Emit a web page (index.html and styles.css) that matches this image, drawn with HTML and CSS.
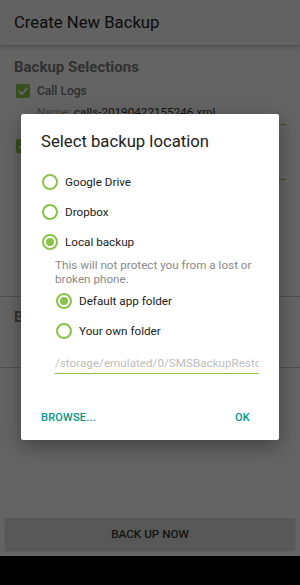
FILE: index.html
```html
<!DOCTYPE html>
<html>
<head>
<meta charset="utf-8">
<link rel="stylesheet" href="styles.css">
</head>
<body>
<div class="screen">
  <div class="app">
    <header class="toolbar">Create New Backup</header>
    <div class="content">
      <section class="selections">
        <h2 class="section-title">Backup Selections</h2>
        <div class="check-row">
          <span class="checkbox"><svg viewBox="0 0 14 14" width="14" height="14"><path d="M3 7.2 L5.8 10 L11.2 4.2" fill="none" stroke="#fff" stroke-width="1.8"/></svg></span>
          <span class="check-label">Call Logs</span>
        </div>
        <div class="name-row">
          <span class="name-key">Name:</span>
          <span class="name-field">calls-20190422155246.xml</span>
        </div>
        <div class="check-row second">
          <span class="checkbox"><svg viewBox="0 0 14 14" width="14" height="14"><path d="M3 7.2 L5.8 10 L11.2 4.2" fill="none" stroke="#fff" stroke-width="1.8"/></svg></span>
        </div>
        <div class="name-row blank">
          <span class="name-field"></span>
        </div>
      </section>
      <section class="location">
        <h2 class="section-title">B</h2>
      </section>
      <div class="spacer"></div>
      <button class="backup-btn">BACK UP NOW</button>
    </div>
  </div>
  <div class="navbar"></div>

  <div class="scrim"></div>

  <div class="dialog">
    <h1 class="dialog-title">Select backup location</h1>
    <div class="options">
      <div class="radio-row"><span class="radio"></span><span class="radio-label">Google Drive</span></div>
      <div class="radio-row"><span class="radio"></span><span class="radio-label">Dropbox</span></div>
      <div class="radio-row"><span class="radio on"></span><span class="radio-label">Local backup</span></div>
    </div>
    <div class="local">
      <p class="hint">This will not protect you from a lost or broken phone.</p>
      <div class="sub-options">
        <div class="radio-row"><span class="radio on"></span><span class="radio-label">Default app folder</span></div>
        <div class="radio-row"><span class="radio"></span><span class="radio-label">Your own folder</span></div>
      </div>
      <div class="path-input">/storage/emulated/0/SMSBackupRestc</div>
    </div>
    <div class="actions">
      <span class="action">BROWSE...</span>
      <span class="action">OK</span>
    </div>
  </div>
</div>
</body>
</html>
```

FILE: styles.css
```css
* { box-sizing: border-box; }
html, body { margin: 0; padding: 0; }
body {
  width: 300px;
  height: 585px;
  overflow: hidden;
  font-family: Roboto, "Noto Sans", sans-serif;
  background: #000;
}
.screen {
  position: relative;
  width: 300px;
  height: 585px;
  display: flex;
  flex-direction: column;
}
.app {
  height: 556px;
  background: #fafafa;
  display: flex;
  flex-direction: column;
}
.toolbar {
  height: 45px;
  padding-left: 14px;
  display: flex;
  align-items: center;
  font-size: 16.7px;
  color: #212121;
  background: #f5f5f5;
  box-shadow: 0 2px 4px rgba(0,0,0,0.25);
  position: relative;
  z-index: 1;
}
.content {
  flex: 1;
  display: flex;
  flex-direction: column;
}
.selections {
  padding: 12px 14px 0 14px;
  height: 252px;
  border-bottom: 1px solid #c8c8c8;
}
.section-title {
  margin: 0;
  font-size: 15px;
  font-weight: bold;
  color: #7a7a7a;
  line-height: 20px;
}
.check-row {
  display: flex;
  align-items: center;
  margin-top: 6px;
  height: 16px;
  padding-left: 2px;
}
.check-row.second { margin-top: 13px; }
.checkbox {
  width: 14px;
  height: 14px;
  background: #8bc34a;
  border-radius: 2px;
  display: block;
}
.checkbox svg { display: block; }
.check-label {
  margin-left: 7px;
  font-size: 12px;
  font-weight: 500;
  color: #757575;
}
.name-row {
  display: flex;
  padding-left: 23px;
  margin-top: 5px;
  font-size: 11.7px;
  line-height: 16px;
}
.name-row.blank { height: 21px; }
.name-key { color: #9e9e9e; }
.name-field {
  margin-left: 3px;
  flex: 1;
  color: #333;
  border-bottom: 1px solid #8bc34a;
  padding-bottom: 4px;
}
.location {
  height: 71px;
  padding: 10px 14px 0;
  border-bottom: 1px solid #c8c8c8;
}
.spacer { flex: 1; }
.backup-btn {
  margin: 0 5px 6px;
  height: 32px;
  border: none;
  border-radius: 2px;
  background: #dcdcdc;
  font-family: Roboto, sans-serif;
  font-size: 11.7px;
  font-weight: 500;
  color: #333;
  box-shadow: 0 1px 2px rgba(0,0,0,0.2);
}
.navbar {
  height: 29px;
  background: #000;
}
.scrim {
  position: absolute;
  left: 0;
  top: 0;
  width: 300px;
  height: 556px;
  background: rgba(0,0,0,0.6);
  z-index: 2;
}
.dialog {
  position: absolute;
  left: 21px;
  top: 114px;
  width: 258px;
  height: 326px;
  background: #fff;
  border-radius: 2px;
  box-shadow: 0 6px 20px rgba(0,0,0,0.35);
  padding: 17px 20px 0 20px;
  display: flex;
  flex-direction: column;
  z-index: 3;
}
.dialog-title {
  margin: 0;
  font-size: 16.7px;
  font-weight: normal;
  color: #212121;
  line-height: 22px;
}
.options {
  margin-top: 21px;
  display: flex;
  flex-direction: column;
  gap: 14px;
}
.radio-row {
  display: flex;
  align-items: center;
  height: 16px;
}
.radio {
  width: 16px;
  height: 16px;
  border: 2px solid #8bc34a;
  border-radius: 50%;
  margin-left: 1px;
  display: flex;
  align-items: center;
  justify-content: center;
  flex: none;
}
.radio.on::after {
  content: "";
  width: 8px;
  height: 8px;
  border-radius: 50%;
  background: #8bc34a;
}
.radio-label {
  margin-left: 7px;
  font-size: 11.7px;
  color: #212121;
}
.local {
  padding-left: 14px;
}
.hint {
  margin: 8px 0 0;
  font-size: 11.7px;
  line-height: 14px;
  color: #8a8a8a;
}
.sub-options {
  margin-top: 7px;
  display: flex;
  flex-direction: column;
  gap: 14px;
}
.path-input {
  margin-top: 16px;
  font-size: 11.7px;
  color: #bdbdbd;
  white-space: nowrap;
  overflow: hidden;
  border-bottom: 1px solid #8bc34a;
  padding-bottom: 2px;
  line-height: 16px;
}
.actions {
  margin-top: 37px;
  display: flex;
  justify-content: space-between;
  padding-right: 9px;
}
.action {
  font-size: 11px;
  font-weight: 500;
  color: #009688;
  letter-spacing: 0.2px;
}
```
